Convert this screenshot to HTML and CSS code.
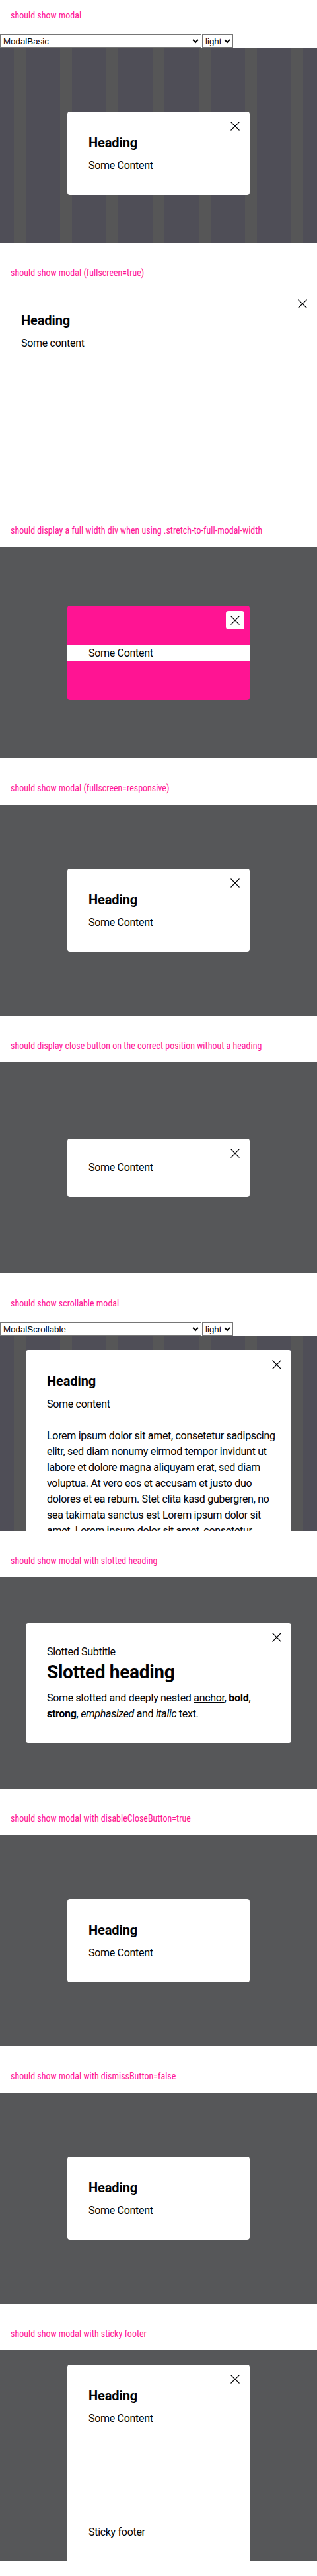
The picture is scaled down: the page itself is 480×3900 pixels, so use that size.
FILE: index.html
```html
<!DOCTYPE html>
<html lang="en">
<head>
<meta charset="utf-8">
<title>Modal</title>
<link rel="stylesheet" href="styles.css">
</head>
<body>

<section class="case">
  <p class="case-title">should show modal</p>
  <div class="stage">
    <div class="controls">
      <select class="sel sel--story"><option>ModalBasic</option></select>
      <select class="sel sel--theme"><option>light</option></select>
    </div>
    <div class="backdrop backdrop--grid">
      <div class="modal">
        <button class="close" type="button" aria-label="Close"><svg width="14" height="14" viewBox="0 0 14 14"><path d="M0.5 0.5L13.5 13.5M13.5 0.5L0.5 13.5" stroke="#010205" stroke-width="1.1" fill="none"/></svg></button>
        <h2 class="modal-heading">Heading</h2>
        <p class="modal-text">Some Content</p>
      </div>
    </div>
  </div>
</section>

<section class="case">
  <p class="case-title">should show modal (fullscreen=true)</p>
  <div class="stage">
    <div class="modal modal--fullscreen">
      <button class="close" type="button" aria-label="Close"><svg width="14" height="14" viewBox="0 0 14 14"><path d="M0.5 0.5L13.5 13.5M13.5 0.5L0.5 13.5" stroke="#010205" stroke-width="1.1" fill="none"/></svg></button>
      <h2 class="modal-heading">Heading</h2>
      <p class="modal-text">Some content</p>
    </div>
  </div>
</section>

<section class="case">
  <p class="case-title">should display a full width div when using .stretch-to-full-modal-width</p>
  <div class="stage backdrop">
    <div class="modal modal--pink">
      <button class="close close--boxed" type="button" aria-label="Close"><svg width="14" height="14" viewBox="0 0 14 14"><path d="M0.5 0.5L13.5 13.5M13.5 0.5L0.5 13.5" stroke="#010205" stroke-width="1.1" fill="none"/></svg></button>
      <div class="stretch"><p class="modal-text">Some Content</p></div>
    </div>
  </div>
</section>

<section class="case">
  <p class="case-title">should show modal (fullscreen=responsive)</p>
  <div class="stage backdrop">
    <div class="modal">
      <button class="close" type="button" aria-label="Close"><svg width="14" height="14" viewBox="0 0 14 14"><path d="M0.5 0.5L13.5 13.5M13.5 0.5L0.5 13.5" stroke="#010205" stroke-width="1.1" fill="none"/></svg></button>
      <h2 class="modal-heading">Heading</h2>
      <p class="modal-text">Some Content</p>
    </div>
  </div>
</section>

<section class="case">
  <p class="case-title">should display close button on the correct position without a heading</p>
  <div class="stage backdrop">
    <div class="modal">
      <button class="close" type="button" aria-label="Close"><svg width="14" height="14" viewBox="0 0 14 14"><path d="M0.5 0.5L13.5 13.5M13.5 0.5L0.5 13.5" stroke="#010205" stroke-width="1.1" fill="none"/></svg></button>
      <p class="modal-text">Some Content</p>
    </div>
  </div>
</section>

<section class="case">
  <p class="case-title">should show scrollable modal</p>
  <div class="stage">
    <div class="controls">
      <select class="sel sel--story"><option>ModalScrollable</option></select>
      <select class="sel sel--theme"><option>light</option></select>
    </div>
    <div class="backdrop backdrop--grid backdrop--top">
      <div class="modal modal--wide">
        <button class="close" type="button" aria-label="Close"><svg width="14" height="14" viewBox="0 0 14 14"><path d="M0.5 0.5L13.5 13.5M13.5 0.5L0.5 13.5" stroke="#010205" stroke-width="1.1" fill="none"/></svg></button>
        <h2 class="modal-heading">Heading</h2>
        <p class="modal-text">Some content</p>
        <p class="modal-text modal-text--gap">Lorem ipsum dolor sit amet, consetetur sadipscing<br>elitr, sed diam nonumy eirmod tempor invidunt ut<br>labore et dolore magna aliquyam erat, sed diam<br>voluptua. At vero eos et accusam et justo duo<br>dolores et ea rebum. Stet clita kasd gubergren, no<br>sea takimata sanctus est Lorem ipsum dolor sit<br>amet. Lorem ipsum dolor sit amet, consetetur</p>
      </div>
    </div>
  </div>
</section>

<section class="case">
  <p class="case-title">should show modal with slotted heading</p>
  <div class="stage backdrop">
    <div class="modal modal--wide">
      <button class="close" type="button" aria-label="Close"><svg width="14" height="14" viewBox="0 0 14 14"><path d="M0.5 0.5L13.5 13.5M13.5 0.5L0.5 13.5" stroke="#010205" stroke-width="1.1" fill="none"/></svg></button>
      <p class="modal-text">Slotted Subtitle</p>
      <h2 class="modal-heading modal-heading--large">Slotted heading</h2>
      <p class="modal-text">Some slotted and deeply nested <a class="link" href="#">anchor</a>, <b>bold</b>,<br><strong>strong</strong>, <em>emphasized</em> and <i>italic</i> text.</p>
    </div>
  </div>
</section>

<section class="case">
  <p class="case-title">should show modal with disableCloseButton=true</p>
  <div class="stage backdrop">
    <div class="modal">
      <h2 class="modal-heading">Heading</h2>
      <p class="modal-text">Some Content</p>
    </div>
  </div>
</section>

<section class="case">
  <p class="case-title">should show modal with dismissButton=false</p>
  <div class="stage backdrop">
    <div class="modal">
      <h2 class="modal-heading">Heading</h2>
      <p class="modal-text">Some Content</p>
    </div>
  </div>
</section>

<section class="case">
  <p class="case-title">should show modal with sticky footer</p>
  <div class="stage backdrop backdrop--top">
    <div class="modal modal--sticky">
      <button class="close" type="button" aria-label="Close"><svg width="14" height="14" viewBox="0 0 14 14"><path d="M0.5 0.5L13.5 13.5M13.5 0.5L0.5 13.5" stroke="#010205" stroke-width="1.1" fill="none"/></svg></button>
      <h2 class="modal-heading">Heading</h2>
      <p class="modal-text">Some Content</p>
      <p class="modal-text modal-footer">Sticky footer</p>
    </div>
  </div>
</section>

</body>
</html>
```

FILE: styles.css
```css
html, body {
  margin: 0;
  padding: 0;
  background: #fff;
}

body {
  font-family: Roboto, "Liberation Sans", sans-serif;
  color: #010205;
}

.case {
  height: 368px;
  margin-bottom: 22px;
}

.case-title {
  margin: 0;
  height: 48px;
  box-sizing: border-box;
  padding: 14px 16px 0;
  font-family: "Liberation Sans Narrow", "Roboto Condensed", Roboto, sans-serif;
  font-size: 14px;
  line-height: 18px;
  color: #ff1493;
  white-space: nowrap;
}

.stage {
  height: 320px;
  overflow: hidden;
  position: relative;
}

.controls {
  display: flex;
  gap: 1px;
  margin-top: 4px;
  height: 20px;
}

.sel {
  height: 20px;
  margin: 0;
  font-family: "Liberation Sans", Arial, sans-serif;
  font-size: 13.333px;
  color: #000;
  background: #fff;
  border: 1px solid #767676;
  border-radius: 0;
}

.sel--story { width: 305px; }
.sel--theme { width: 47px; }

.backdrop {
  background: #565759;
  display: flex;
  justify-content: center;
  align-items: center;
}

.backdrop--grid {
  height: 320px;
  background: repeating-linear-gradient(90deg, #4f4e57 0 21px, #565657 21px 39px, #4f4e57 39px 70px);
}

.backdrop--top {
  align-items: flex-start;
  padding-top: 22px;
  box-sizing: border-box;
}

.modal {
  position: relative;
  box-sizing: border-box;
  width: 276px;
  padding: 32px;
  background: #fff;
  border-radius: 4px;
  flex: none;
}

.modal--wide { width: 402px; }

.modal--fullscreen {
  width: 100%;
  height: 320px;
  border-radius: 0;
}

.modal--pink {
  background: #ff1493;
  padding: 60px 32px 59px;
}

.modal--sticky {
  height: 298px;
  display: flex;
  flex-direction: column;
  border-radius: 4px 4px 0 0;
}

.close {
  position: absolute;
  top: 8px;
  right: 8px;
  width: 28px;
  height: 28px;
  padding: 0;
  margin: 0;
  border: 0;
  background: transparent;
  display: flex;
  align-items: center;
  justify-content: center;
  border-radius: 4px;
}

.close--boxed { background: #fff; }

.modal-heading {
  margin: 0 0 8px;
  font-size: 20px;
  line-height: 30px;
  font-weight: 700;
  letter-spacing: -0.1px;
}

.modal-heading--large {
  font-size: 28px;
  line-height: 38px;
  letter-spacing: -0.3px;
}

.modal-text {
  margin: 0;
  font-size: 16px;
  line-height: 24px;
  letter-spacing: -0.3px;
  white-space: nowrap;
}

.modal-text--gap { margin-top: 24px; }

.modal-footer { margin-top: auto; }

.stretch {
  margin: 0 -32px;
  padding: 0 32px;
  background: #fff;
}

.link {
  color: inherit;
  text-decoration: underline;
}

b, strong { font-weight: 700; }
```
